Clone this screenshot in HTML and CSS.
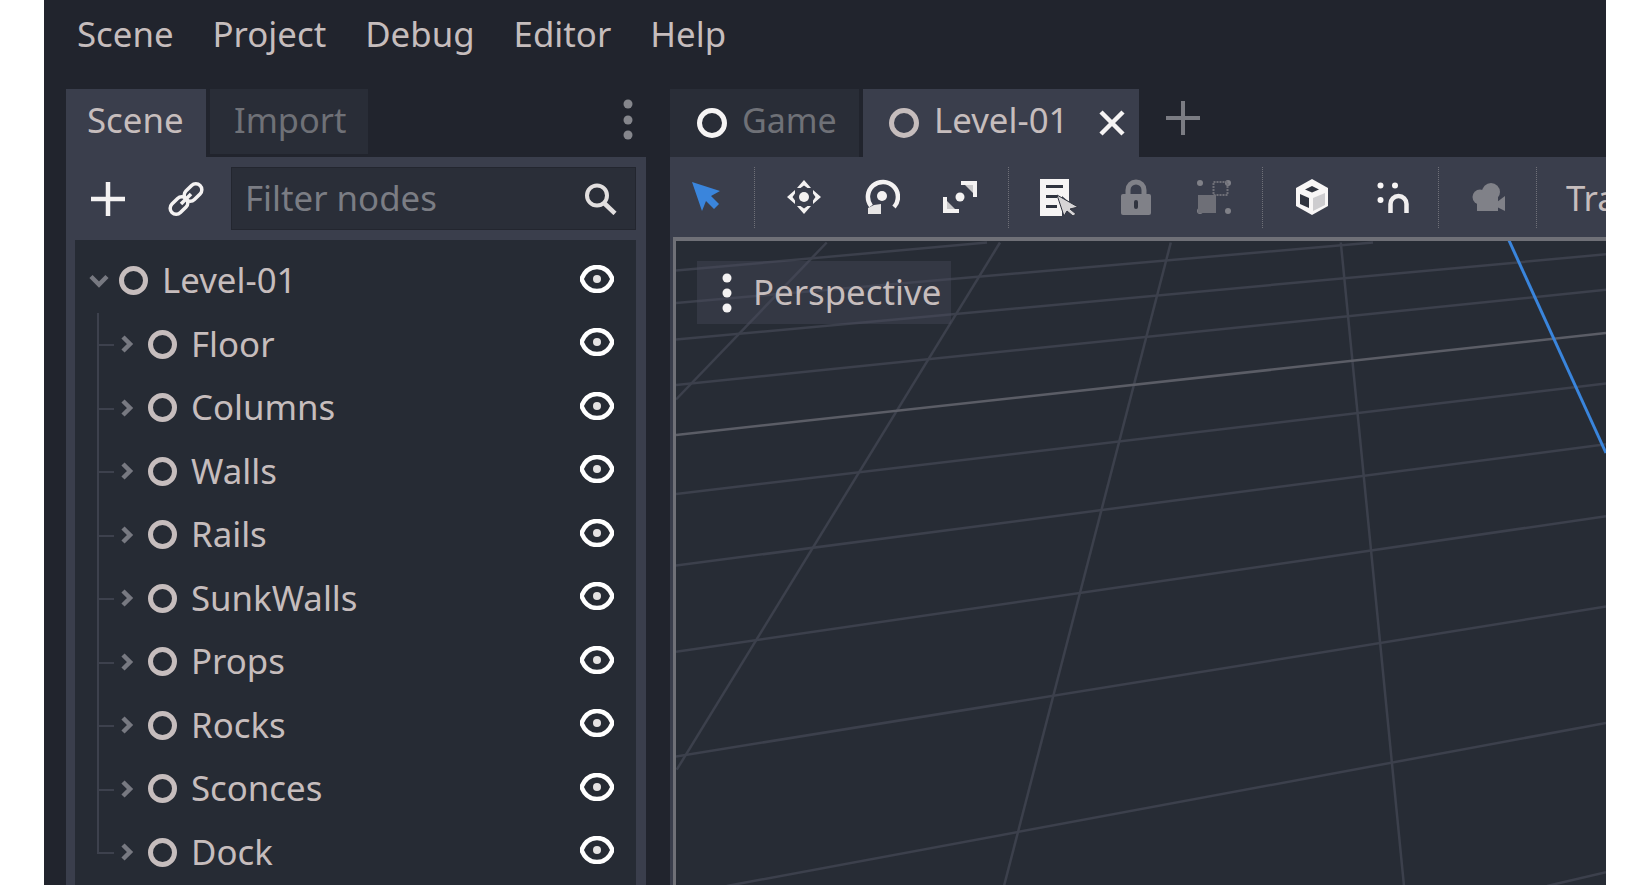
FILE: index.html
```html
<!DOCTYPE html>
<html lang="en">
<head>
    <meta charset="UTF-8">
    <title>Level-01 - Editor</title>
    <link rel="stylesheet" href="styles.css">
</head>
<body>
    <svg class="defs" width="0" height="0">
        <symbol id="eye" viewBox="0 0 34 28">
            <path d="M1.500 14C5 5 11 2 17 2s12 3 15.500 12C29 23 23 26 17 26S5 23 1.500 14Z" fill="none" stroke="#fff" stroke-width="4.500"/>
            <circle cx="17" cy="14" r="4" fill="#e4e2e2"/>
        </symbol>
        <symbol id="arrow" viewBox="0 0 16 18">
            <path d="M4 2l7 7-7 7" fill="none" stroke="#777981" stroke-width="4.500"/>
        </symbol>
    </svg>

    <div class="app">
        <div class="menubar">
            <span>Scene</span>
            <span>Project</span>
            <span>Debug</span>
            <span>Editor</span>
            <span>Help</span>
        </div>

        <div class="main">
            <!-- scene dock -->
            <div class="dock">
                <div class="dock-tabs">
                    <div class="dock-tab active">Scene</div>
                    <div class="dock-tab">Import</div>
                    <svg class="kebab" width="10" height="42" viewBox="0 0 10 42">
                        <circle cx="5" cy="5" r="4.500" fill="#85868c"/>
                        <circle cx="5" cy="21" r="4.500" fill="#85868c"/>
                        <circle cx="5" cy="36" r="4.500" fill="#85868c"/>
                    </svg>
                </div>
                <div class="dock-panel">
                    <div class="dock-tools">
                        <svg class="add-icon" width="36" height="36" viewBox="0 0 36 36">
                            <path d="M18 1v34M1 18h34" stroke="#f4f2f2" stroke-width="4.500"/>
                        </svg>
                        <svg class="link-icon" width="36" height="36" viewBox="0 0 36 36">
                            <g fill="none" stroke="#f4f2f2" stroke-width="3.500">
                                <rect x="1" y="18.500" width="20" height="12" rx="6" transform="rotate(-45 11 24.500)"/>
                                <rect x="15" y="5.500" width="20" height="12" rx="6" transform="rotate(-45 25 11.500)"/>
                                <path d="M13 23l10-10"/>
                            </g>
                        </svg>
                        <div class="filter">
                            <span>Filter nodes</span>
                            <svg width="33" height="32" viewBox="0 0 33 32">
                                <circle cx="13" cy="12.500" r="10" fill="none" stroke="#e2dfdf" stroke-width="4"/>
                                <path d="M20 20l11 10.500" stroke="#e2dfdf" stroke-width="4.500"/>
                            </svg>
                        </div>
                    </div>
                    <div class="tree">
                        <div class="row row-root">
                            <svg class="down" width="20" height="14" viewBox="0 0 20 14"><path d="M2 2.500l8 8 8-8" fill="none" stroke="#777981" stroke-width="4.500"/></svg>
                            <i class="node"></i>
                            <span class="name">Level-01</span>
                            <svg class="eye" width="34" height="28"><use href="#eye"/></svg>
                        </div>
                        <div class="row row-child">
                            <svg class="right" width="16" height="18"><use href="#arrow"/></svg>
                            <i class="node"></i>
                            <span class="name">Floor</span>
                            <svg class="eye" width="34" height="28"><use href="#eye"/></svg>
                        </div>
                        <div class="row row-child">
                            <svg class="right" width="16" height="18"><use href="#arrow"/></svg>
                            <i class="node"></i>
                            <span class="name">Columns</span>
                            <svg class="eye" width="34" height="28"><use href="#eye"/></svg>
                        </div>
                        <div class="row row-child">
                            <svg class="right" width="16" height="18"><use href="#arrow"/></svg>
                            <i class="node"></i>
                            <span class="name">Walls</span>
                            <svg class="eye" width="34" height="28"><use href="#eye"/></svg>
                        </div>
                        <div class="row row-child">
                            <svg class="right" width="16" height="18"><use href="#arrow"/></svg>
                            <i class="node"></i>
                            <span class="name">Rails</span>
                            <svg class="eye" width="34" height="28"><use href="#eye"/></svg>
                        </div>
                        <div class="row row-child">
                            <svg class="right" width="16" height="18"><use href="#arrow"/></svg>
                            <i class="node"></i>
                            <span class="name">SunkWalls</span>
                            <svg class="eye" width="34" height="28"><use href="#eye"/></svg>
                        </div>
                        <div class="row row-child">
                            <svg class="right" width="16" height="18"><use href="#arrow"/></svg>
                            <i class="node"></i>
                            <span class="name">Props</span>
                            <svg class="eye" width="34" height="28"><use href="#eye"/></svg>
                        </div>
                        <div class="row row-child">
                            <svg class="right" width="16" height="18"><use href="#arrow"/></svg>
                            <i class="node"></i>
                            <span class="name">Rocks</span>
                            <svg class="eye" width="34" height="28"><use href="#eye"/></svg>
                        </div>
                        <div class="row row-child">
                            <svg class="right" width="16" height="18"><use href="#arrow"/></svg>
                            <i class="node"></i>
                            <span class="name">Sconces</span>
                            <svg class="eye" width="34" height="28"><use href="#eye"/></svg>
                        </div>
                        <div class="row row-child">
                            <svg class="right" width="16" height="18"><use href="#arrow"/></svg>
                            <i class="node"></i>
                            <span class="name">Dock</span>
                            <svg class="eye" width="34" height="28"><use href="#eye"/></svg>
                        </div>
                    </div>
                </div>
            </div>

            <!-- editor area -->
            <div class="editor">
                <div class="scene-tabs">
                    <div class="scene-tab game">
                        <i class="node white"></i>
                        <span>Game</span>
                    </div>
                    <div class="scene-tab active">
                        <i class="node"></i>
                        <span>Level-01</span>
                        <svg class="close" width="26" height="26" viewBox="0 0 26 26">
                            <path d="M2 2l22 22M24 2L2 24" stroke="#f6f4f4" stroke-width="4.500"/>
                        </svg>
                    </div>
                    <svg class="new-tab" width="36" height="36" viewBox="0 0 36 36">
                        <path d="M18 1v34M1 18h34" stroke="#7b7c83" stroke-width="4"/>
                    </svg>
                </div>

                <div class="toolbar">
                    <div class="tool first">
                        <svg width="30" height="30" viewBox="0 0 30 30">
                            <path d="M1 1l28 9-9 5 8 8-5 5-8-8-4 10Z" fill="#3a85dc"/>
                        </svg>
                    </div>
                    <div class="sep"></div>
                    <div class="tool">
                        <svg width="36" height="36" viewBox="0 0 36 36" fill="#f4f2f2">
                            <circle cx="18" cy="18" r="5"/>
                            <path d="M18 1l7 8h-3.500L18 6.500 14.500 9H11ZM18 35l7-8h-3.500L18 29.500 14.500 27H11ZM1 18l8-7v3.500L6.500 18 9 21.500V25ZM35 18l-8-7v3.500l2.500 3.500-2.500 3.500V25Z"/>
                        </svg>
                    </div>
                    <div class="tool">
                        <svg width="36" height="36" viewBox="0 0 36 36">
                            <circle cx="18" cy="17" r="5" fill="#f4f2f2"/>
                            <path d="M30 28A15 15 0 1 0 7 27" fill="none" stroke="#f4f2f2" stroke-width="4.500"/>
                            <path d="M4 35h13V25l-7 1-6 3Z" fill="#e6e4e4"/>
                        </svg>
                    </div>
                    <div class="tool">
                        <svg width="36" height="36" viewBox="0 0 36 36">
                            <circle cx="18" cy="18" r="4.500" fill="#f4f2f2"/>
                            <path d="M19 2h16v16h-4V6H19ZM17 34H1V18h4v12h12Z" fill="#f4f2f2"/>
                            <path d="M23 6h8v8ZM13 30H5v-8Z" fill="#c9c8ca"/>
                        </svg>
                    </div>
                    <div class="sep"></div>
                    <div class="tool">
                        <svg class="list-icon" width="38" height="37" viewBox="0 0 38 37">
                            <path d="M0 0h29v23l-7-6v20H0Z" fill="#f6f4f4"/>
                            <path d="M6 6h17v3H6ZM6 16h11v3H6ZM6 26h11v3H6Z" fill="#30343f"/>
                            <path d="M17 16l21 12-8 2 6 5-3 2-6-5-3 5Z" fill="#d6d4d6" stroke="#30343f" stroke-width="1"/>
                        </svg>
                    </div>
                    <div class="tool">
                        <svg width="30" height="36" viewBox="0 0 30 36">
                            <path d="M7 17V11a8 8 0 0 1 16 0v6" fill="none" stroke="#808188" stroke-width="5"/>
                            <rect y="15" width="30" height="21" rx="2" fill="#808188"/>
                            <rect x="13" y="21" width="4" height="9" rx="2" fill="#30343f"/>
                        </svg>
                    </div>
                    <div class="tool">
                        <svg width="36" height="36" viewBox="0 0 36 36" fill="#808188">
                            <circle cx="4" cy="4" r="3"/>
                            <circle cx="32" cy="4" r="3"/>
                            <circle cx="4" cy="32" r="3"/>
                            <circle cx="32" cy="32" r="3"/>
                            <rect x="2" y="16" width="18" height="18" fill="#6e6f77"/>
                            <rect x="17.500" y="3" width="14" height="13" fill="none" stroke="#6e6f77" stroke-width="2" stroke-dasharray="2 1"/>
                        </svg>
                    </div>
                    <div class="sep"></div>
                    <div class="tool">
                        <svg width="36" height="36" viewBox="0 0 36 36">
                            <path d="M18 0l16 9v18l-16 9-16-9V9Z" fill="#f8f6f6"/>
                            <path d="M18 7l7 3.500-7 3-7-3Z" fill="#30343f"/>
                            <path d="M6 15l9 4v10l-9-4Z" fill="#30343f"/>
                            <path d="M19 19l12-5v12l-12 6Z" fill="#cdcccf"/>
                        </svg>
                    </div>
                    <div class="tool">
                        <svg class="magnet-icon" width="32" height="31" viewBox="0 0 32 31">
                            <circle cx="3.500" cy="3.500" r="3" fill="#f8f6f6"/>
                            <circle cx="18" cy="3.500" r="3" fill="#f8f6f6"/>
                            <circle cx="3.500" cy="18" r="3" fill="#f8f6f6"/>
                            <path d="M13.500 31V22a8 8 0 0 1 16 0v9" fill="none" stroke="#f0eeee" stroke-width="4.500"/>
                        </svg>
                    </div>
                    <div class="sep"></div>
                    <div class="tool">
                        <svg width="33" height="29" viewBox="0 0 33 29" fill="#808188">
                            <circle cx="8" cy="14" r="7.500"/>
                            <circle cx="19" cy="9" r="9"/>
                            <rect x="5" y="12" width="21" height="16"/>
                            <path d="M25 19l8-6v15l-8-4Z"/>
                        </svg>
                    </div>
                    <div class="sep"></div>
                    <span class="tool-text">Transform</span>
                </div>

                <div class="viewport-wrap">
                    <div class="viewport">
                        <svg class="grid" width="930" height="644" viewBox="676 241 930 644">
                            <g stroke="#3c404c" stroke-width="2.500">
                                <path d="M676 270.600L987 242.500"/>
                                <path d="M676 303L1373 242.500"/>
                                <path d="M676 339.600L1606 254.300"/>
                                <path d="M676 385L1606 289.800"/>
                                <path d="M676 494L1606 383.600"/>
                                <path d="M676 565.600L1606 444.200"/>
                                <path d="M676 651.800L1606 516.200"/>
                                <path d="M676 756.500L1606 606.600"/>
                                <path d="M726.700 886L1606 722.900"/>
                                <path d="M1547 886L1606 872.200"/>
                                <path d="M1170.800 242.500L1004 886"/>
                                <path d="M1340.800 242.500L1404 886"/>
                                <path d="M1000 242.500L676.700 769.700"/>
                                <path d="M826.700 242.500L676 399.500"/>
                            </g>
                            <path d="M676 435L1606 333" stroke="#5b5d66" stroke-width="2.500"/>
                            <path d="M1509 240.500L1606 453" stroke="#3a85dc" stroke-width="3"/>
                        </svg>
                        <div class="view-menu">
                            <svg width="10" height="40" viewBox="0 0 10 40">
                                <circle cx="5" cy="5" r="4.500" fill="#f4f2f2"/>
                                <circle cx="5" cy="20" r="4.500" fill="#f4f2f2"/>
                                <circle cx="5" cy="35" r="4.500" fill="#f4f2f2"/>
                            </svg>
                            <span>Perspective</span>
                        </div>
                    </div>
                </div>
            </div>
        </div>
    </div>
</body>
</html>
```

FILE: styles.css
```css
body {
    margin: 0;
    background-color: #fff;
    font-family: "Noto Sans", sans-serif;
    font-size: 34.8px;
    color: #c6bdbd;
}

svg {
    display: block;
    flex: none;
}

.defs {
    position: absolute;
}

.app {
    width: 1562px;
    height: 885px;
    margin-left: 44px;
    display: flex;
    flex-direction: column;
    overflow: hidden;
    background-color: #21242d;
}

.menubar {
    height: 89px;
    flex: none;
    padding-left: 33px;
    padding-bottom: 22px;
    box-sizing: border-box;
    display: flex;
    align-items: center;
    gap: 39px;
}

.main {
    flex: 1;
    min-height: 0;
    padding-left: 22px;
    display: flex;
    gap: 24px;
}

/* scene dock */
.dock {
    width: 580px;
    display: flex;
    flex-direction: column;
}

.dock-tabs {
    height: 68px;
    flex: none;
    display: flex;
    gap: 4px;
    align-items: stretch;
}

.dock-tab {
    width: 158px;
    height: 65px;
    display: flex;
    align-items: center;
    padding-left: 24px;
    padding-bottom: 5px;
    box-sizing: border-box;
    font-size: 34.4px;
    background-color: #292d37;
    color: #6f7177;
}

.dock-tab.active {
    width: 140px;
    height: 68px;
    padding-left: 21px;
    padding-bottom: 7px;
    font-size: 34.8px;
    background-color: #3a3e4c;
    color: #c6bdbd;
}

.kebab {
    margin: 10px 13px 0 auto;
}

.dock-panel {
    flex: 1;
    min-height: 0;
    padding: 10px 10px 0 9px;
    display: flex;
    flex-direction: column;
    gap: 10px;
    background-color: #3a3e4c;
}

.dock-tools {
    height: 63px;
    flex: none;
    display: flex;
    align-items: center;
}

.add-icon {
    margin-left: 15px;
}

.link-icon {
    margin-left: 42px;
}

.filter {
    height: 63px;
    margin-left: 27px;
    flex: 1;
    display: flex;
    align-items: center;
    justify-content: space-between;
    padding: 0 18px 0 13px;
    box-sizing: border-box;
    background-color: #2a2e38;
    border: 1px solid #23262f;
    color: #7b7d84;
}

.filter span {
    padding-bottom: 2px;
}

.tree {
    flex: 1;
    min-height: 0;
    padding-top: 9px;
    background-color: #262b34;
    overflow: hidden;
}

.row {
    position: relative;
    height: 63.5px;
    display: flex;
    align-items: center;
}

.row-root {
    padding-left: 14px;
}

.row-child {
    padding-left: 44px;
}

/* tree guide lines */
.row-child::before {
    content: "";
    position: absolute;
    left: 22px;
    top: 0;
    width: 15px;
    height: 50%;
    border-left: 2px solid #3d414d;
    border-bottom: 2px solid #3d414d;
}

.row-child::after {
    content: "";
    position: absolute;
    left: 22px;
    top: 50%;
    bottom: 0;
    border-left: 2px solid #3d414d;
}

.row-child:last-child::after {
    display: none;
}

.node {
    display: block;
    flex: none;
    width: 29px;
    height: 29px;
    box-sizing: border-box;
    border: 5px solid #c6bdbd;
    border-radius: 50%;
}

.node.white {
    border-color: #f6f4f4;
}

.down {
    margin-right: 10px;
}

.right {
    margin-right: 13px;
}

.name {
    margin-left: 14px;
    padding-bottom: 2px;
}

.eye {
    margin-left: auto;
    margin-right: 22px;
    margin-bottom: 4px;
}

/* editor area */
.editor {
    flex: 1;
    min-width: 0;
    display: flex;
    flex-direction: column;
}

.scene-tabs {
    height: 68px;
    flex: none;
    display: flex;
    gap: 4px;
}

.scene-tab {
    display: flex;
    align-items: center;
    box-sizing: border-box;
    padding-bottom: 7px;
}

.scene-tab .node {
    width: 30px;
    height: 30px;
    border-width: 5.5px;
    margin-top: 7px;
    margin-right: 15px;
}

.scene-tab.game {
    width: 189px;
    padding-left: 27px;
    font-size: 34px;
    color: #6f7177;
    background-color: #292d37;
}

.scene-tab.active {
    width: 276px;
    padding-left: 26px;
    background-color: #3a3e4c;
}

.close {
    margin-left: auto;
    margin-right: 14px;
    margin-top: 7px;
}

.new-tab {
    margin-left: 22px;
    margin-top: 11px;
}

.toolbar {
    height: 80px;
    flex: none;
    display: flex;
    align-items: center;
    overflow: hidden;
    background-color: #3a3e4c;
}

.tool {
    width: 78px;
    flex: none;
    display: flex;
    justify-content: center;
}

.tool.first {
    width: 75px;
    padding-right: 3px;
    padding-bottom: 2px;
    box-sizing: border-box;
}

.list-icon {
    margin-left: 2px;
}

.magnet-icon {
    margin-left: 6px;
}

.sep {
    height: 61px;
    flex: none;
    margin: 0 10px 0 9px;
    border-left: 1px dotted #6f7078;
}

.tool-text {
    flex: none;
    margin-left: 19px;
}

.viewport-wrap {
    flex: 1;
    min-height: 0;
    padding-left: 3px;
    background-color: #3a3e4c;
}

.viewport {
    position: relative;
    height: 100%;
    box-sizing: border-box;
    border-top: 4px solid #6f7077;
    border-left: 3px solid #6f7077;
    background-color: #272c35;
    overflow: hidden;
}

.grid {
    position: absolute;
    left: 0;
    top: 0;
}

.view-menu {
    position: absolute;
    left: 21px;
    top: 20px;
    width: 254px;
    height: 63px;
    box-sizing: border-box;
    padding-left: 25px;
    display: flex;
    align-items: center;
    gap: 21px;
    background-color: rgba(72, 76, 92, 0.4);
}

.view-menu span {
    padding-bottom: 2px;
}
```
